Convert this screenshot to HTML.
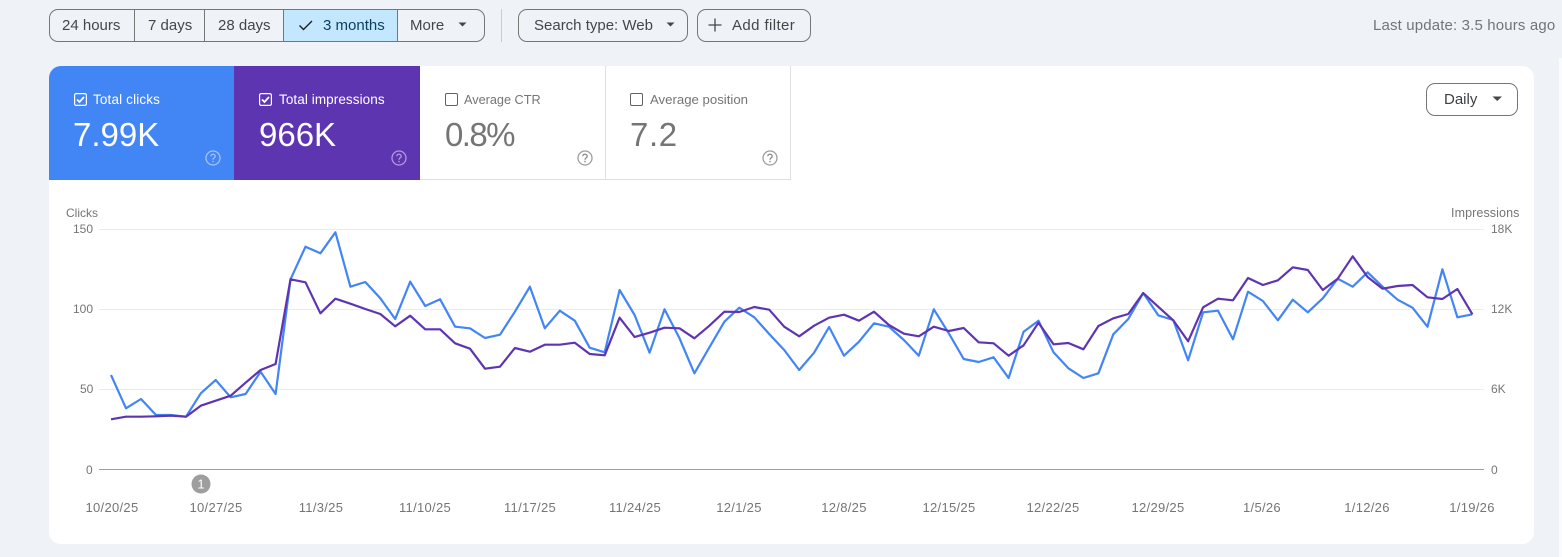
<!DOCTYPE html>
<html><head><meta charset="utf-8"><style>
html,body{margin:0;padding:0}
body{width:1562px;height:557px;background:#eff3f8;position:relative;overflow:hidden;font-family:"Liberation Sans",sans-serif}
.a{position:absolute;white-space:nowrap}
.b{position:absolute;box-sizing:border-box;border:1px solid #747775;border-radius:9px;top:9px;height:33px}
.t{position:absolute;white-space:nowrap;font-size:15px;line-height:18px;top:16.5px;color:#444746}
.v{position:absolute;top:9px;width:1px;height:33px;background:#747775}
.tile{position:absolute;top:66px;height:114px}
.lbl{position:absolute;top:91.5px;line-height:16px;white-space:nowrap}
.num{position:absolute;top:115px;font-size:33px;line-height:40px;white-space:nowrap}
.ax{position:absolute;white-space:nowrap;font-size:12px;line-height:14px;color:#757575}
.dt{position:absolute;top:501px;width:80px;text-align:center;font-size:13px;letter-spacing:.3px;line-height:14px;color:#757575}
</style></head><body>
<div class="a" style="left:1559px;top:58px;width:3px;height:499px;background:#fafbfc"></div>

<!-- toolbar -->
<div class="b" style="left:49px;width:436px"></div>
<div class="a" style="left:284px;top:10px;width:113px;height:31px;background:#c2e7ff"></div>
<div class="v" style="left:134px"></div>
<div class="v" style="left:204px"></div>
<div class="v" style="left:283px"></div>
<div class="v" style="left:397px"></div>
<div class="t" style="left:62px">24 hours</div>
<div class="t" style="left:148px">7 days</div>
<div class="t" style="left:218px">28 days</div>
<svg class="a" style="left:297px;top:16px" width="18" height="18" viewBox="0 0 18 18"><path d="M2.5 9.5 L6.5 13.5 L15 5" fill="none" stroke="#1f1f1f" stroke-width="1.4"/></svg>
<div class="t" style="left:323px;color:#0b3f5c">3 months</div>
<div class="t" style="left:410px">More</div>
<svg class="a" style="left:458px;top:22px" width="10" height="6"><path d="M0.5 0.5H8.5L4.5 4.5Z" fill="#444746"/></svg>
<div class="a" style="left:501px;top:9px;width:1px;height:33px;background:#c9cdd2"></div>
<div class="b" style="left:518px;width:170px"></div>
<div class="t" style="left:534px">Search type: Web</div>
<svg class="a" style="left:666px;top:22px" width="10" height="6"><path d="M0.5 0.5H8.5L4.5 4.5Z" fill="#444746"/></svg>
<div class="b" style="left:697px;width:114px"></div>
<svg class="a" style="left:708px;top:18px" width="14" height="14"><path d="M7 0.5V13.5M0.5 7H13.5" stroke="#444746" stroke-width="1.3" fill="none"/></svg>
<div class="t" style="left:732px;letter-spacing:.4px">Add filter</div>
<div class="a" style="left:1373px;top:16.5px;font-size:15px;line-height:18px;color:#70757a;letter-spacing:.15px">Last update: 3.5 hours ago</div>

<!-- card -->
<div class="a" style="left:49px;top:66px;width:1485px;height:478px;background:#fff;border-radius:12px"></div>
<div class="tile" style="left:49px;width:185px;background:#4285f4;border-top-left-radius:12px"></div>
<div class="tile" style="left:234px;width:186px;background:#5e35b1"></div>
<div class="a" style="left:420px;top:179px;width:371px;height:1px;background:#e0e0e0"></div>
<div class="a" style="left:605px;top:66px;width:1px;height:114px;background:#e0e0e0"></div>
<div class="a" style="left:790px;top:66px;width:1px;height:114px;background:#e0e0e0"></div>

<!-- tile content -->
<svg class="a" style="left:74px;top:93px" width="13" height="13"><rect x=".6" y=".6" width="11.8" height="11.8" rx="1.5" fill="none" stroke="#fff" stroke-width="1.2"/><path d="M3 6.5L5.5 9L10 4" fill="none" stroke="#fff" stroke-width="1.8"/></svg>
<div class="lbl" style="left:93px;color:#fff;font-size:13.5px;letter-spacing:.15px">Total clicks</div>
<div class="num" style="left:73px;color:#fff">7.99K</div>
<svg class="a" style="left:259px;top:93px" width="13" height="13"><rect x=".6" y=".6" width="11.8" height="11.8" rx="1.5" fill="none" stroke="#fff" stroke-width="1.2"/><path d="M3 6.5L5.5 9L10 4" fill="none" stroke="#fff" stroke-width="1.8"/></svg>
<div class="lbl" style="left:279px;color:#fff;font-size:13.5px;letter-spacing:.08px">Total impressions</div>
<div class="num" style="left:259px;color:#fff">966K</div>
<svg class="a" style="left:445px;top:93px" width="13" height="13"><rect x=".5" y=".5" width="12" height="12" rx="1.5" fill="none" stroke="#5f6368"/></svg>
<div class="lbl" style="left:464px;color:#757575;font-size:12.7px">Average CTR</div>
<div class="num" style="left:445px;color:#757575;letter-spacing:-1.6px">0.8%</div>
<svg class="a" style="left:630px;top:93px" width="13" height="13"><rect x=".5" y=".5" width="12" height="12" rx="1.5" fill="none" stroke="#5f6368"/></svg>
<div class="lbl" style="left:650px;color:#757575;font-size:13.2px">Average position</div>
<div class="num" style="left:630px;color:#757575;letter-spacing:.6px">7.2</div>

<svg class="a" style="left:205px;top:150px" width="16" height="16" opacity=".5"><circle cx="8" cy="8" r="7" fill="none" stroke="#fff" stroke-width="1.3"/><path d="M5.8 6.3C5.8 3.6 10.2 3.6 10.2 6.2C10.2 7.8 8 7.8 8 9.8" fill="none" stroke="#fff" stroke-width="1.3"/><rect x="7.3" y="10.8" width="1.4" height="1.5" fill="#fff"/></svg>
<svg class="a" style="left:391px;top:150px" width="16" height="16" opacity=".5"><circle cx="8" cy="8" r="7" fill="none" stroke="#fff" stroke-width="1.3"/><path d="M5.8 6.3C5.8 3.6 10.2 3.6 10.2 6.2C10.2 7.8 8 7.8 8 9.8" fill="none" stroke="#fff" stroke-width="1.3"/><rect x="7.3" y="10.8" width="1.4" height="1.5" fill="#fff"/></svg>
<svg class="a" style="left:577px;top:150px" width="16" height="16"><circle cx="8" cy="8" r="7" fill="none" stroke="#9e9e9e" stroke-width="1.3"/><path d="M5.8 6.3C5.8 3.6 10.2 3.6 10.2 6.2C10.2 7.8 8 7.8 8 9.8" fill="none" stroke="#8a8a8a" stroke-width="1.3"/><rect x="7.3" y="10.8" width="1.4" height="1.5" fill="#8a8a8a"/></svg>
<svg class="a" style="left:762px;top:150px" width="16" height="16"><circle cx="8" cy="8" r="7" fill="none" stroke="#9e9e9e" stroke-width="1.3"/><path d="M5.8 6.3C5.8 3.6 10.2 3.6 10.2 6.2C10.2 7.8 8 7.8 8 9.8" fill="none" stroke="#8a8a8a" stroke-width="1.3"/><rect x="7.3" y="10.8" width="1.4" height="1.5" fill="#8a8a8a"/></svg>

<!-- Daily -->
<div class="b" style="left:1426px;top:83px;width:92px"></div>
<div class="a" style="left:1444px;top:90.5px;font-size:15px;line-height:18px;color:#3c4043">Daily</div>
<svg class="a" style="left:1492px;top:96px" width="11" height="6"><path d="M0.5 0.5H10L5.2 5Z" fill="#444746"/></svg>

<!-- chart -->
<svg class="a" style="left:0;top:0" width="1562" height="557">
<path d="M99 229.5H1484M99 309.5H1484M99 389.5H1484" stroke="#ececec" stroke-width="1" fill="none"/>
<path d="M99 469.5H1484" stroke="#9e9e9e" stroke-width="1" fill="none"/>
<polyline fill="none" stroke="#4285f4" stroke-width="2.2" stroke-linejoin="round" points="111,375 126,408.3 141,399 156,415 171,415 186,416.7 200.8,393.3 215.7,380 230.7,397.3 245.6,394 260.6,371.7 275.6,394 290.5,279.3 305.5,246.7 320.4,253.3 335.4,232.3 350.4,286.7 365.3,282 380.3,298.3 395.2,319 410.2,281.7 425.2,306 440.1,299.3 455.1,326.7 470,328.3 485,338 500,334.7 514.9,311.7 529.9,286.7 544.8,328.3 559.8,310.7 574.8,320.7 589.7,347.7 604.7,352.3 619.6,290 634.6,315 649.6,352.7 664.5,309.3 679.5,338.3 694.4,373.3 709.4,347.3 724.4,321.7 739.3,307.7 754.3,317.3 769.2,334 784.2,350 799.2,370 814.1,352.7 829.1,327 844,355.7 859,341.7 874,323.3 888.9,326.7 903.9,340 918.8,355.7 933.8,309.3 948.8,333.3 963.7,359 978.7,362 993.6,357.3 1008.6,378 1023.6,331.7 1038.5,320.7 1053.5,352.3 1068.4,368.3 1083.4,378 1098.4,373.3 1113.3,334.3 1128.3,319 1143.2,293 1158.2,315.3 1173.2,320 1188.1,360.3 1203.1,312.3 1218,310.7 1233,339.3 1248,291.7 1262.9,301 1277.9,320.3 1292.8,299.7 1307.8,312.3 1322.8,298.3 1337.7,278.7 1352.7,286.7 1367.6,272.3 1382.6,286.7 1397.6,299.7 1412.5,307.7 1427.5,326.7 1442.4,269.3 1457.4,317.3 1472.4,314.3"/>
<polyline fill="none" stroke="#5e35b1" stroke-width="2.2" stroke-linejoin="round" points="111,419.3 126,416.7 141,416.7 156,416.3 171,415.7 186,416.7 200.8,405.7 215.7,400.7 230.7,395.7 245.6,382.7 260.6,370 275.6,364 290.5,279.3 305.5,282.3 320.4,313.3 335.4,298.7 350.4,303.7 365.3,309 380.3,314 395.2,326.3 410.2,315.7 425.2,329.3 440.1,329.3 455.1,343.3 470,348.7 485,368.7 500,366.7 514.9,348 529.9,351.7 544.8,344.7 559.8,344.7 574.8,342.7 589.7,354 604.7,355.3 619.6,317.7 634.6,337 649.6,332.7 664.5,327.7 679.5,328.3 694.4,338.3 709.4,325.7 724.4,311.7 739.3,312 754.3,307 769.2,309.7 784.2,326.7 799.2,336.3 814.1,325.7 829.1,317.7 844,314.7 859,320.7 874,311.7 888.9,325 903.9,333.7 918.8,336.3 933.8,326.7 948.8,331 963.7,328 978.7,342.3 993.6,343.3 1008.6,355.7 1023.6,345.3 1038.5,322.7 1053.5,344.3 1068.4,343 1083.4,349.3 1098.4,326 1113.3,318.3 1128.3,314 1143.2,293 1158.2,306.7 1173.2,320.3 1188.1,341.3 1203.1,307.3 1218,298.7 1233,300.3 1248,278 1262.9,285 1277.9,280.3 1292.8,267.3 1307.8,270 1322.8,290 1337.7,278.7 1352.7,256.3 1367.6,277 1382.6,288.7 1397.6,286 1412.5,285 1427.5,297.3 1442.4,299 1457.4,289 1472.4,314.3"/>
<circle cx="201" cy="484" r="9.5" fill="#9e9e9e"/>
<text x="201" y="488.5" text-anchor="middle" font-family="Liberation Sans,sans-serif" font-size="12.5" fill="#fff">1</text>
</svg>

<div class="ax" style="left:66px;top:205.5px">Clicks</div>
<div class="ax" style="left:1451px;top:205.5px;font-size:12.5px;letter-spacing:.1px">Impressions</div>
<div class="ax" style="left:73px;top:222px">150</div>
<div class="ax" style="left:73px;top:302px">100</div>
<div class="ax" style="left:80px;top:382px">50</div>
<div class="ax" style="left:86px;top:463px">0</div>
<div class="ax" style="left:1491px;top:222px">18K</div>
<div class="ax" style="left:1491px;top:302px">12K</div>
<div class="ax" style="left:1491px;top:382px">6K</div>
<div class="ax" style="left:1491px;top:463px">0</div>

<div class="dt" style="left:72px">10/20/25</div>
<div class="dt" style="left:176px">10/27/25</div>
<div class="dt" style="left:281px">11/3/25</div>
<div class="dt" style="left:385px">11/10/25</div>
<div class="dt" style="left:490px">11/17/25</div>
<div class="dt" style="left:595px">11/24/25</div>
<div class="dt" style="left:699px">12/1/25</div>
<div class="dt" style="left:804px">12/8/25</div>
<div class="dt" style="left:909px">12/15/25</div>
<div class="dt" style="left:1013px">12/22/25</div>
<div class="dt" style="left:1118px">12/29/25</div>
<div class="dt" style="left:1222px">1/5/26</div>
<div class="dt" style="left:1327px">1/12/26</div>
<div class="dt" style="left:1432px">1/19/26</div>
</body></html>
